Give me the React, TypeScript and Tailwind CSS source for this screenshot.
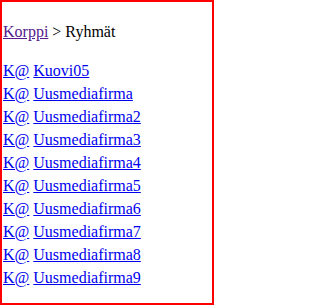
export default function App() {
  const groups = [
    "Kuovi05",
    "Uusmediafirma",
    "Uusmediafirma2",
    "Uusmediafirma3",
    "Uusmediafirma4",
    "Uusmediafirma5",
    "Uusmediafirma6",
    "Uusmediafirma7",
    "Uusmediafirma8",
    "Uusmediafirma9",
  ];

  return (
    <div
      className="w-[214px] h-[305px] border-2 border-[#ff0000] bg-white text-black text-[16px]"
      style={{ fontFamily: '"Liberation Serif", serif' }}
    >
      <div className="pl-[1px] pt-[18px] leading-[23px]">
        <a href="#" className="text-[#551a8b] underline">
          Korppi
        </a>{" "}
        &gt; Ryhmät
      </div>
      <ul className="pl-[1px] mt-[16px]">
        {groups.map((g) => (
          <li key={g} className="leading-[23px]">
            <a href="#" className="text-[#0000ee] underline">
              K@
            </a>{" "}
            <a href="#" className="text-[#0000ee] underline">
              {g}
            </a>
          </li>
        ))}
      </ul>
    </div>
  );
}
